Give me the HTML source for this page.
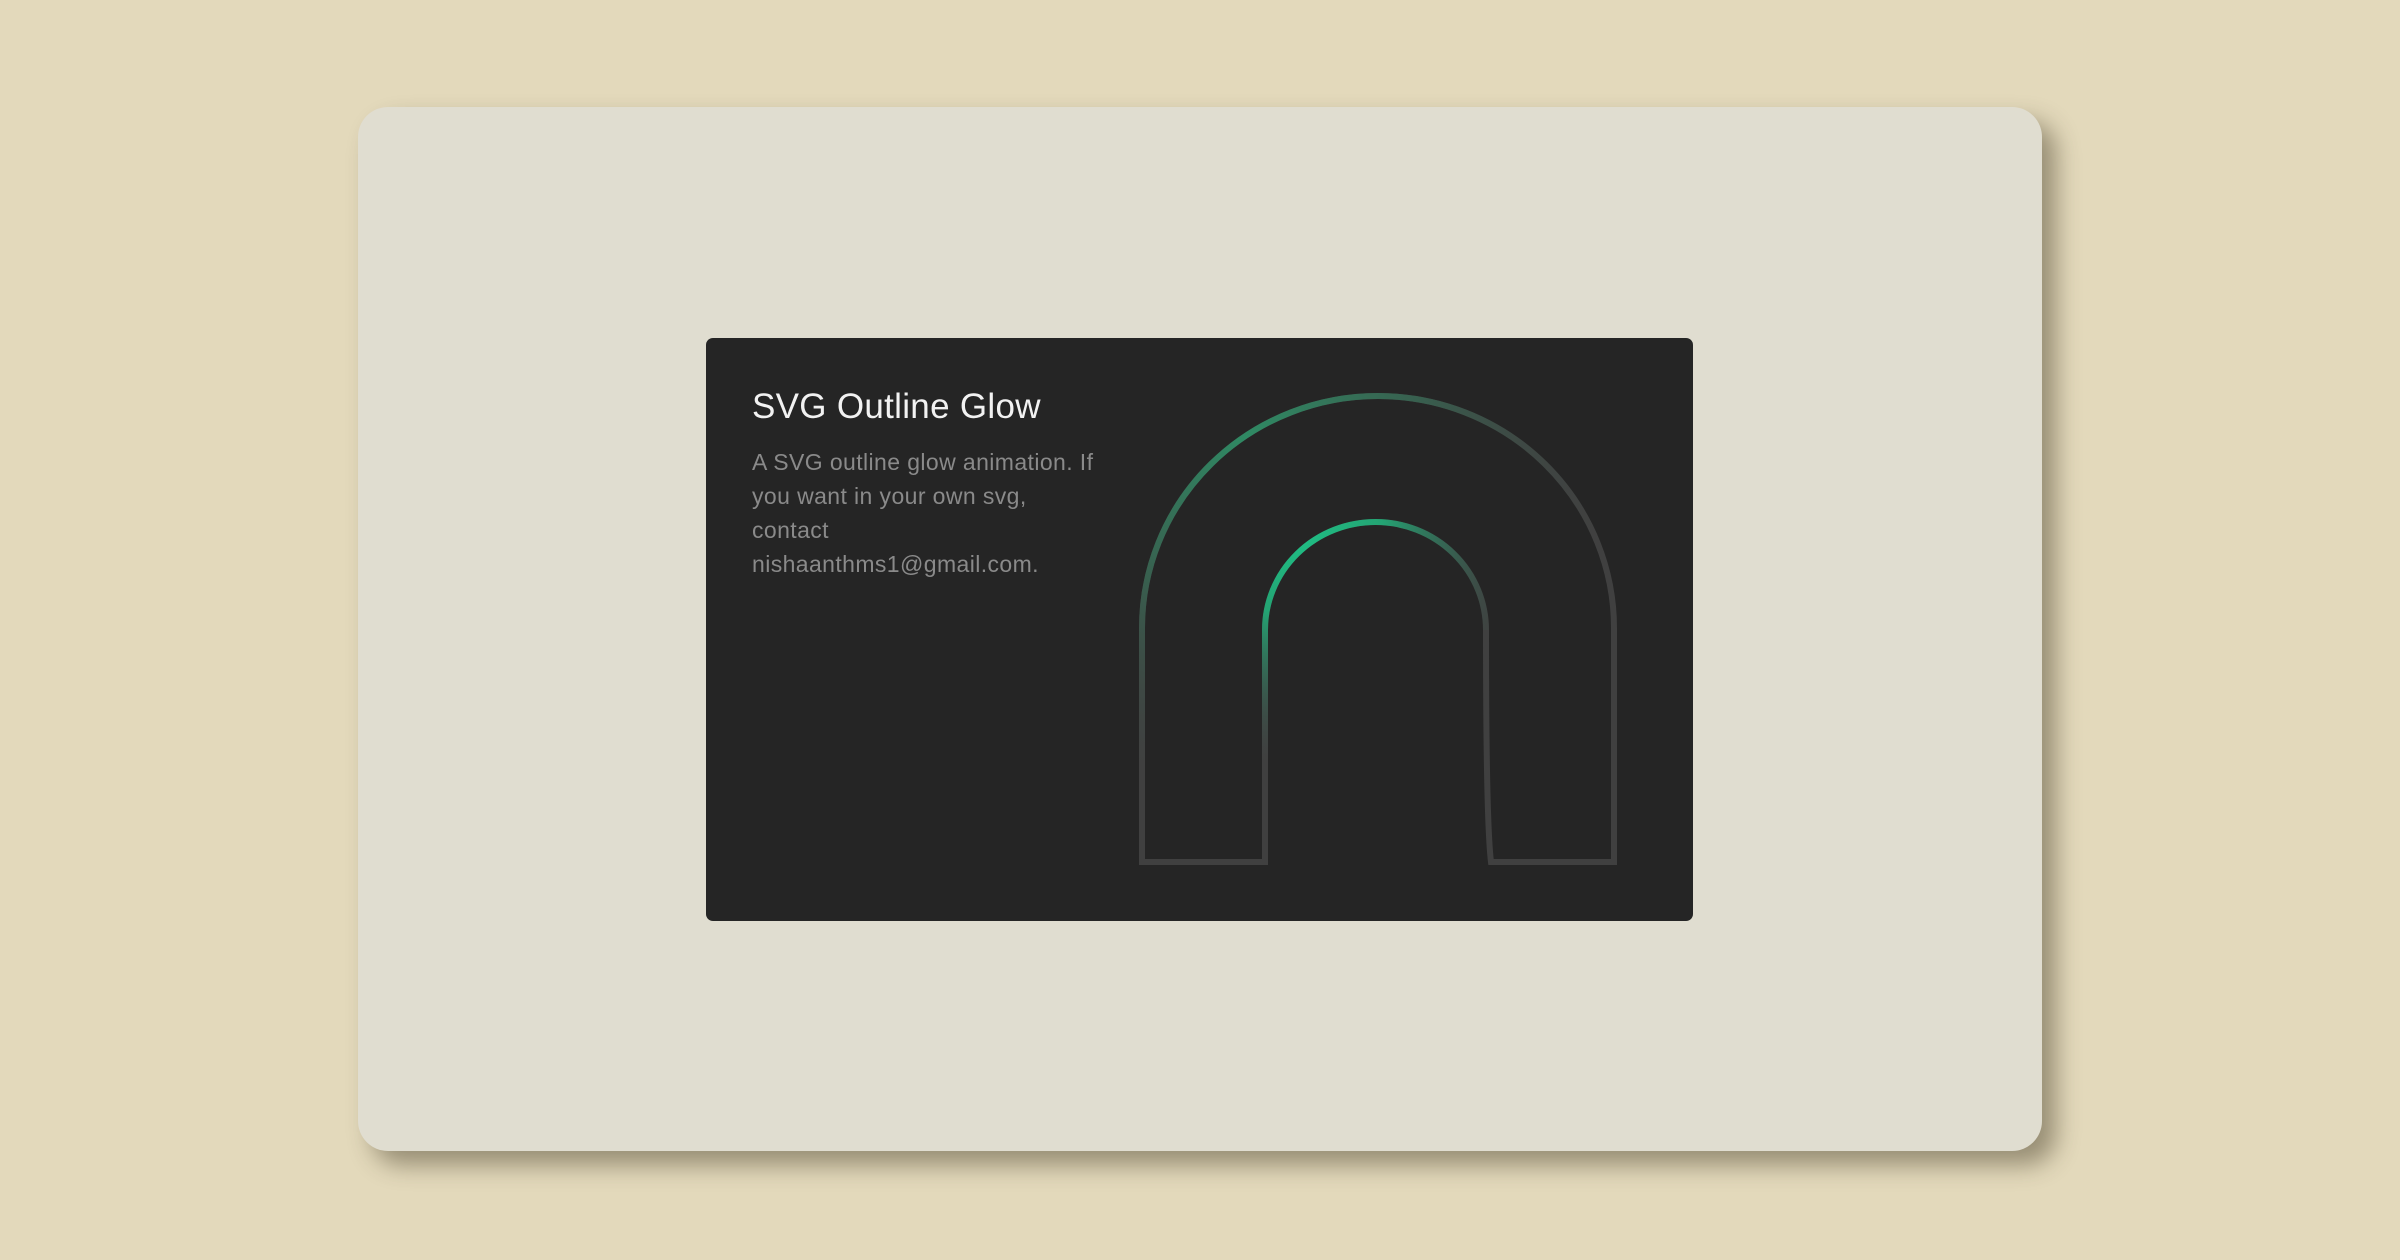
<!DOCTYPE html>
<html><head><meta charset="utf-8"><style>
html,body{margin:0;width:2400px;height:1260px;background:#e3d9bb;overflow:hidden;font-family:"Liberation Sans",sans-serif}
.outer{position:absolute;left:358px;top:107px;width:1684px;height:1044px;background:#e0ddd0;border-radius:30px;box-shadow:14px 14px 24px rgba(60,50,30,.45)}
.card{position:absolute;left:706px;top:338px;width:987px;height:583px;background:#252525;border-radius:7px}
h1{position:absolute;left:46px;top:49px;margin:0;font-weight:normal;font-size:35px;color:#f2f2f2;letter-spacing:.3px}
p{position:absolute;left:46px;top:107px;width:355px;margin:0;font-size:23px;line-height:34px;color:#8a8a8a;letter-spacing:.4px}
svg{position:absolute;left:0;top:0}
</style></head><body>
<div class="outer"></div>
<div class="card">
<h1>SVG Outline Glow</h1>
<p>A SVG outline glow animation. If you want in your own svg, contact nishaanthms1@gmail.com.</p>
<svg width="987" height="583" viewBox="706 338 987 583">
<defs>
<radialGradient id="g1" cx="1250" cy="440" r="380" gradientUnits="userSpaceOnUse">
<stop offset="0" stop-color="#2f8a64"/><stop offset="0.45" stop-color="#38604f"/><stop offset="1" stop-color="#404040" stop-opacity="0"/>
</radialGradient>
<radialGradient id="g2" cx="1300" cy="535" r="240" gradientUnits="userSpaceOnUse">
<stop offset="0" stop-color="#1fbf85"/><stop offset="0.35" stop-color="#24a373"/><stop offset="1" stop-color="#404040" stop-opacity="0"/>
</radialGradient>
</defs>
<g fill="none" stroke-width="6">
<path d="M1142 862 V628 A236 232 0 0 1 1614 628 V862 H1491 Q1486 820 1486 630 A110.5 108 0 0 0 1265 630 V862 Z" stroke="#404040"/>
<path d="M1142 760 V628 A236 232 0 0 1 1614 628" stroke="url(#g1)"/>
<path d="M1265 760 V630 A110.5 108 0 0 1 1486 630" stroke="url(#g2)"/>
</g>
</svg>
</div>
</body></html>
